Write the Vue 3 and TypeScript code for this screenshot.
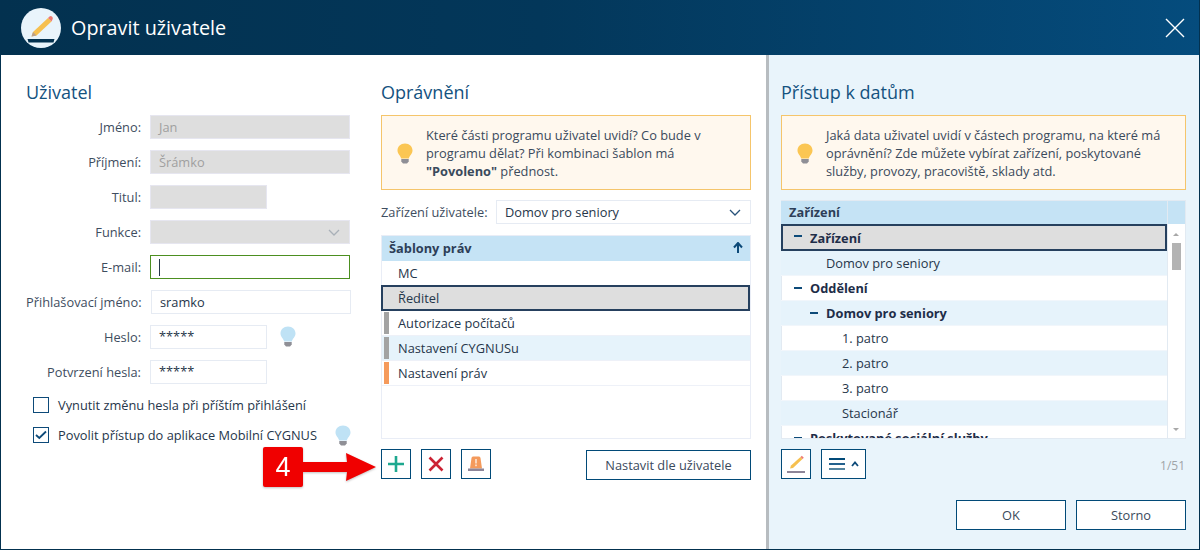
<script setup lang="ts">
interface Field { label: string; value: string; kind: string }
const fields: Field[] = [
  { label: 'Jméno:', value: 'Jan', kind: 'dis' },
  { label: 'Příjmení:', value: 'Šrámko', kind: 'dis' },
  { label: 'Titul:', value: '', kind: 'dis short' },
  { label: 'Funkce:', value: '', kind: 'dis select' },
  { label: 'E-mail:', value: '', kind: 'focus' },
  { label: 'Přihlašovací jméno:', value: 'sramko', kind: 'login' },
  { label: 'Heslo:', value: '*****', kind: 'short bulb pw' },
  { label: 'Potvrzení hesla:', value: '*****', kind: 'short pw' },
]
const perms = [
  { t: 'MC', bar: '', cls: '' },
  { t: 'Ředitel', bar: '', cls: 'sel' },
  { t: 'Autorizace počítačů', bar: '#a3a3a3', cls: '' },
  { t: 'Nastavení CYGNUSu', bar: '#a3a3a3', cls: 'alt' },
  { t: 'Nastavení práv', bar: '#f59a5b', cls: '' },
]
const tree = [
  { t: 'Zařízení', lvl: 0, b: true, cls: 'sel' },
  { t: 'Domov pro seniory', lvl: 1, b: false, cls: 'alt' },
  { t: 'Oddělení', lvl: 0, b: true, cls: '' },
  { t: 'Domov pro seniory', lvl: 1, b: true, cls: 'alt' },
  { t: '1. patro', lvl: 2, b: false, cls: '' },
  { t: '2. patro', lvl: 2, b: false, cls: 'alt' },
  { t: '3. patro', lvl: 2, b: false, cls: '' },
  { t: 'Stacionář', lvl: 2, b: false, cls: 'alt' },
  { t: 'Poskytované sociální služby', lvl: 0, b: true, cls: '' },
]
</script>

<template>
  <div class="win">
    <header class="head">
      <div class="logo">
        <svg width="40" height="40" viewBox="0 0 40 40">
          <circle cx="20" cy="20" r="20" fill="#e9f4fb" />
          <path d="M10.500 28.500 L12 24 L27 10 L30.500 13.500 L15.500 27.500 Z" fill="#f6c04f" />
          <path d="M10.500 28.500 L12 24 L15.500 27.500 Z" fill="#b9a08c" />
          <path d="M27 10 L28.500 8.500 Q29.500 7.500 31 8.500 Q32.500 10 31.500 11.500 L30.500 13.500 Z" fill="#ee7a72" />
          <path d="M6.500 31 H33.500 L32.500 34.500 H7.500 Z" fill="#03314f" />
        </svg>
      </div>
      <div class="head-title">Opravit uživatele</div>
      <svg class="close" width="20" height="20" viewBox="0 0 20 20">
        <path d="M1 1 L19 19 M19 1 L1 19" stroke="#fff" stroke-width="1.400" fill="none" />
      </svg>
    </header>

    <main class="body">
      <section class="main-pane">
        <div class="col-user">
          <h2>Uživatel</h2>
          <div class="form">
            <div v-for="f in fields" :key="f.label" class="frow">
              <label class="flabel">{{ f.label }}</label>
              <div class="input" :class="f.kind">
                <span>{{ f.value }}</span>
                <i v-if="f.kind === 'focus'" class="caret"></i>
                <svg v-if="f.kind.includes('select')" class="chev" width="12" height="7" viewBox="0 0 12 7">
                  <path d="M1 1 L6 6 L11 1" stroke="#a9b0b8" stroke-width="1.300" fill="none" />
                </svg>
              </div>
              <svg v-if="f.kind.includes('bulb')" class="bulb bulb-pw" width="16" height="22" viewBox="0 0 16 22">
                <path d="M8 0.500 C3.600 0.500 0.500 3.600 0.500 7.500 C0.500 11 3.500 12.500 4.200 15.500 H11.800 C12.500 12.500 15.500 11 15.500 7.500 C15.500 3.600 12.400 0.500 8 0.500 Z" fill="#bfe2f5" />
                <path d="M4.300 16 H11.700 V18.500 L10 20.500 H6 L4.300 18.500 Z" fill="#8f8f96" />
              </svg>
            </div>
          </div>
          <div class="check first">
            <span class="box"></span>
            <span>Vynutit změnu hesla při příštím přihlášení</span>
          </div>
          <div class="check">
            <span class="box">
              <svg width="12" height="10" viewBox="0 0 12 10"><path d="M1 5 L4.300 8 L11 1.500" stroke="#0d4a79" stroke-width="1.800" fill="none" /></svg>
            </span>
            <span>Povolit přístup do aplikace Mobilní CYGNUS</span>
            <svg class="bulb bulb-mob" width="16" height="22" viewBox="0 0 16 22">
              <path d="M8 0.500 C3.600 0.500 0.500 3.600 0.500 7.500 C0.500 11 3.500 12.500 4.200 15.500 H11.800 C12.500 12.500 15.500 11 15.500 7.500 C15.500 3.600 12.400 0.500 8 0.500 Z" fill="#bfe2f5" />
              <path d="M4.300 16 H11.700 V18.500 L10 20.500 H6 L4.300 18.500 Z" fill="#8f8f96" />
            </svg>
          </div>
        </div>

        <div class="col-perm">
          <h2>Oprávnění</h2>
          <div class="tip">
            <svg class="tipbulb" width="16" height="22" viewBox="0 0 16 22">
              <path d="M8 0.500 C3.600 0.500 0.500 3.600 0.500 7.500 C0.500 11 3.500 12.500 4.200 15.500 H11.800 C12.500 12.500 15.500 11 15.500 7.500 C15.500 3.600 12.400 0.500 8 0.500 Z" fill="#fbc653" />
              <path d="M4.300 16 H11.700 V18.500 L10 20.500 H6 L4.300 18.500 Z" fill="#8f8f96" />
            </svg>
            <p>Které části programu uživatel uvidí? Co bude v programu dělat? Při kombinaci šablon má <b>"Povoleno"</b> přednost.</p>
          </div>
          <div class="org">
            <span class="org-label">Zařízení uživatele:</span>
            <div class="input org-sel">
              <span>Domov pro seniory</span>
              <svg class="chev" width="12" height="7" viewBox="0 0 12 7">
                <path d="M1 1 L6 6 L11 1" stroke="#27527a" stroke-width="1.300" fill="none" />
              </svg>
            </div>
          </div>
          <div class="grid">
            <div class="ghead ghead-perm">
              <span>Šablony práv</span>
              <svg width="10" height="11" viewBox="0 0 10 11"><path d="M5 11 V2 M1 5.500 L5 1 L9 5.500" stroke="#0c4a79" stroke-width="2" fill="none" /></svg>
            </div>
            <div v-for="p in perms" :key="p.t" class="grow" :class="p.cls">
              <i class="gbar" :style="{ background: p.bar || 'transparent' }"></i>
              <span>{{ p.t }}</span>
            </div>
          </div>
          <div class="actions">
            <button class="icon-btn">
              <svg width="18" height="18" viewBox="0 0 18 18"><path d="M9 1 V17 M1 9 H17" stroke="#1ea88f" stroke-width="2.600" fill="none" /></svg>
            </button>
            <button class="icon-btn">
              <svg width="16" height="16" viewBox="0 0 16 16"><path d="M1.500 1.500 L14.500 14.500 M14.500 1.500 L1.500 14.500" stroke="#cc2233" stroke-width="2.600" fill="none" /></svg>
            </button>
            <button class="icon-btn">
              <svg width="16" height="16" viewBox="0 0 16 16">
                <path d="M3.500 2 Q3.700 0.500 5 0.500 H11 Q12.300 0.500 12.500 2 L14 12.500 H2 Z" fill="#f49a5c" />
                <rect x="7.200" y="3" width="1.600" height="4.500" fill="#fde6d5" />
                <rect x="7.200" y="8.500" width="1.600" height="1.700" fill="#fde6d5" />
                <rect x="0" y="12.500" width="16" height="2.500" fill="#8d8598" />
              </svg>
            </button>
            <button class="text-btn set-btn">Nastavit dle uživatele</button>
          </div>
        </div>

        <div class="callout">
          <div class="badge">4</div>
          <svg class="arrow" width="74" height="32" viewBox="0 0 74 32">
            <path d="M0 11 H44 L43 2 L73 16 L43 30 L44 21 H0 Z" fill="#f00000" />
          </svg>
        </div>
      </section>

      <aside class="side">
        <h2>Přístup k datům</h2>
        <div class="tip">
          <svg class="tipbulb" width="16" height="22" viewBox="0 0 16 22">
            <path d="M8 0.500 C3.600 0.500 0.500 3.600 0.500 7.500 C0.500 11 3.500 12.500 4.200 15.500 H11.800 C12.500 12.500 15.500 11 15.500 7.500 C15.500 3.600 12.400 0.500 8 0.500 Z" fill="#fbc653" />
            <path d="M4.300 16 H11.700 V18.500 L10 20.500 H6 L4.300 18.500 Z" fill="#8f8f96" />
          </svg>
          <p>Jaká data uživatel uvidí v částech programu, na které má oprávnění? Zde můžete vybírat zařízení, poskytované služby, provozy, pracoviště, sklady atd.</p>
        </div>
        <div class="tree">
          <div class="tree-main">
            <div class="ghead thead"><span>Zařízení</span></div>
            <div class="tree-rows">
              <div v-for="(r, i) in tree" :key="i" class="trow" :class="[r.cls, 'l' + r.lvl, { bold: r.b }]">
                <i v-if="r.b" class="minus"></i>
                <span>{{ r.t }}</span>
              </div>
            </div>
          </div>
          <div class="sbar">
            <div class="sbar-head"></div>
            <div class="sbar-track">
              <i class="up"></i>
              <i class="thumb"></i>
              <i class="down"></i>
            </div>
          </div>
        </div>
        <div class="actions side-actions">
          <button class="icon-btn">
            <svg width="20" height="20" viewBox="0 0 20 20">
              <path d="M4 14.500 L5 11.500 L14.500 3 L16.500 5 L7 14 Z" fill="#f6c04f" />
              <path d="M14.500 3 L15.800 1.800 L17.800 3.800 L16.500 5 Z" fill="#ee7a72" />
              <rect x="1" y="17" width="18" height="2" fill="#8d8598" />
            </svg>
          </button>
          <button class="icon-btn menu-btn">
            <span class="lines"><i class="c1"></i><i class="c2"></i><i class="c3"></i></span>
            <svg width="8" height="6" viewBox="0 0 8 6"><path d="M1 5 L4 1.500 L7 5" stroke="#0d4a79" stroke-width="1.800" fill="none" /></svg>
          </button>
          <span class="count">1/51</span>
        </div>
        <div class="footer">
          <button class="text-btn foot-btn">OK</button>
          <button class="text-btn foot-btn">Storno</button>
        </div>
      </aside>
    </main>
  </div>
</template>

<style>
html, body { margin: 0; padding: 0; background: #fff; }
</style>

<style scoped>
* { box-sizing: border-box; }
.win {
  width: 1200px;
  height: 550px;
  display: flex;
  flex-direction: column;
  overflow: hidden;
  font-family: "Open Sans", sans-serif;
  font-size: 12.800px;
  color: #26364a;
  border: 1px solid #03314f;
  border-top: 0;
}
.head {
  height: 55px;
  margin: 0 -1px;
  flex: none;
  display: flex;
  align-items: center;
  padding: 0 15px 0 21px;
  background: linear-gradient(90deg, #03314f 0%, #03375a 45%, #054c7d 100%);
  color: #fff;
}
.logo { width: 40px; height: 40px; margin-right: 10px; }
.logo svg { display: block; }
.head-title { font-size: 19.800px; flex: 1; }
.body { flex: 1; display: flex; min-height: 0; }
.main-pane {
  width: 765px;
  flex: none;
  position: relative;
  display: flex;
  padding: 25px 15px 0 25px;
  background: #fff;
}
.col-user { width: 325px; margin-right: 30px; flex: none; }
.col-perm { width: 370px; flex: none; }
h2 {
  margin: 0 0 10px;
  height: 25px;
  line-height: 25px;
  font-size: 18px;
  font-weight: 400;
  color: #14527f;
}
.form { display: flex; flex-direction: column; gap: 11px; }
.frow { display: flex; align-items: center; height: 24px; }
.flabel { width: 115px; margin-right: 9px; flex: none; text-align: right; white-space: nowrap; color: #3e4d60; }
.input {
  width: 200px;
  height: 24px;
  display: flex;
  align-items: center;
  justify-content: space-between;
  padding: 0 9px 0 8px;
  background: #fff;
  border: 1px solid #e6ebf3;
  font-size: 12.800px;
  color: #26364a;
}
.input.dis { background: #dedede; border-color: #e6e6f0; color: #a0a0a0; }
.input.short { width: 117px; }
.input.focus { border-color: #4c8f20; justify-content: flex-start; }
.input.login { margin-left: 1px; }
.input.pw span { position: relative; top: -1px; }
.caret { width: 1px; height: 17px; background: #26364a; }
.bulb-pw { margin-left: 13px; }
.check { display: flex; align-items: center; height: 16px; margin: 14px 0 0 7px; gap: 9px; position: relative; }
.check.first { margin-top: 13px; }
.box {
  width: 16px;
  height: 16px;
  border: 1px solid #0d4a79;
  display: flex;
  align-items: center;
  justify-content: center;
  background: #fff;
  flex: none;
}
.bulb-mob { position: absolute; left: 302px; top: -2px; }
.tip {
  height: 75px;
  display: flex;
  align-items: center;
  padding: 0 10px 0 15px;
  background: #fff8ee;
  border: 1px solid #f5c56b;
}
.tipbulb { flex: none; margin-right: 13px; margin-top: 2px; }
.tip p { margin: 0; line-height: 18px; font-size: 12.800px; color: #3a4a5c; }
.tip b { font-weight: 700; }
.org { display: flex; align-items: center; margin-top: 10px; height: 24px; }
.org-label { width: 115px; flex: none; color: #3e4d60; white-space: nowrap; }
.org-sel { flex: 1; width: auto; }
.grid {
  margin-top: 11px;
  height: 204px;
  border: 1px solid #e9edf6;
  background: #fff;
}
.ghead {
  height: 24px;
  display: flex;
  align-items: center;
  justify-content: space-between;
  padding: 0 7px;
  background: #c5e3f5;
  font-weight: 700;
  color: #2d3e58;
}
.ghead-perm { height: 25px; padding-bottom: 2px; }
.grow {
  height: 25px;
  display: flex;
  align-items: center;
  border-bottom: 1px solid #eef1f8;
  color: #26364a;
}
.grow.alt { background: #e6f3fb; }
.grow.sel, .trow.sel {
  background: #dedede;
  outline: 2px solid #26405e;
  outline-offset: -2px;
  border-bottom: 0;
}
.grow.sel { height: 26px; margin: -1px 0 0 -1px; padding-left: 1px; }
.gbar { width: 5px; height: 22px; margin: 0 9px 0 2px; flex: none; }
.actions { display: flex; align-items: flex-start; gap: 10px; margin-top: 10px; }
button { font-family: inherit; cursor: pointer; }
.icon-btn {
  width: 30px;
  height: 30px;
  padding: 0;
  border: 1px solid #014a78;
  background: #fff;
  display: flex;
  align-items: center;
  justify-content: center;
}
.text-btn {
  height: 30px;
  padding: 0;
  border: 1px solid #014a78;
  background: #fff;
  font-size: 12.800px;
  color: #3a4a5c;
}
.set-btn { width: 165px; margin: 1px 0 0 auto; }
.callout { position: absolute; left: 262px; top: 392px; display: flex; align-items: center; filter: drop-shadow(0 1px 1px rgba(0,0,0,.25)); }
.badge {
  width: 40px;
  height: 40px;
  background: #f00000;
  color: #fff;
  border-radius: 2px;
  display: flex;
  align-items: center;
  justify-content: center;
  font-size: 27px;
  font-family: "Liberation Sans", sans-serif;
}
.arrow { display: block; margin-top: -1px; }
.side {
  flex: 1;
  padding: 25px 13px 0 12px;
  background: #e9f4fb;
  border-left: 3px solid #b7bcc0;
}
.tree {
  margin-top: 10px;
  height: 239px;
  display: flex;
  border: 1px solid #e2eaf2;
  background: #fff;
}
.tree-main { flex: 1; min-width: 0; margin-left: -1px; overflow: hidden; }
.thead { height: 23px; padding: 0 7px 2px 8px; }
.tree-rows { height: 215px; overflow: hidden; }
.trow { height: 25px; display: flex; align-items: center; position: relative; border-bottom: 1px solid #f1f6fb; color: #26364a; white-space: nowrap; }
.trow.sel { height: 27px; }
.trow.alt { background: #e6f3fb; }
.trow.bold { font-weight: 700; color: #1e2d48; }
.trow.l0 { padding-left: 29px; }
.trow.l1 { padding-left: 45px; }
.trow.l2 { padding-left: 61px; }
.minus { position: absolute; top: 11px; width: 8px; height: 2px; background: #0d4a79; }
.l0 .minus { left: 13px; }
.l1 .minus { left: 29px; }
.sbar { width: 18px; flex: none; border-left: 1px solid #e2eaf2; display: flex; flex-direction: column; }
.sbar-head { height: 23px; background: #c5e3f5; }
.sbar-track { flex: 1; position: relative; }
.up, .down { position: absolute; left: 5px; width: 0; height: 0; border-left: 3px solid transparent; border-right: 3px solid transparent; }
.up { top: 9px; border-bottom: 3px solid #a8a8a8; }
.down { bottom: 7px; border-top: 3px solid #a8a8a8; }
.thumb { position: absolute; left: 4px; top: 19px; width: 9px; height: 27px; background: #b3b3b3; }
.side-actions { align-items: center; }
.menu-btn { width: 45px; gap: 6px; }
.lines { display: flex; flex-direction: column; gap: 3px; width: 16px; }
.lines i { height: 2px; display: block; }
.c1 { background: #014a78; }
.c2 { background: #23618e; }
.c3 { background: #55849f; }
.count { margin-left: auto; color: #a0a4a8; font-size: 12px; position: relative; top: 1px; right: 1px; }
.footer { display: flex; justify-content: flex-end; gap: 10px; margin-top: 21px; }
.foot-btn { width: 110px; }
</style>
